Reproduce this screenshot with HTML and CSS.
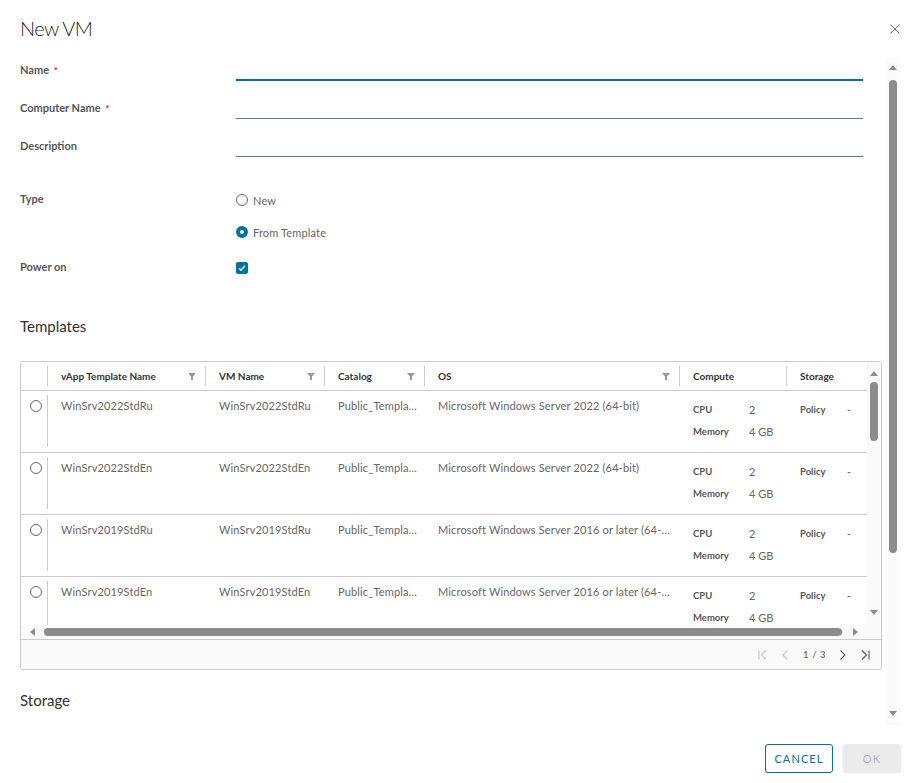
FILE: index.html
```html
<!DOCTYPE html>
<html lang="en">
<head>
<meta charset="utf-8">
<title>New VM</title>
<link rel="stylesheet" href="styles.css">
</head>
<body>
<div class="modal">
  <header class="modal-header">
    <h1 class="modal-title">New VM</h1>
    <button class="close" type="button" aria-label="Close">
      <svg width="10" height="10" viewBox="0 0 10 10"><path d="M0.5 0.5L9.5 9.5M9.5 0.5L0.5 9.5" stroke="#737373" stroke-width="1"/></svg>
    </button>
  </header>

  <div class="modal-body">
    <div class="body-content">
      <form class="form">
        <div class="field">
          <label class="label">Name <span class="req">*</span></label>
          <input class="input input-focus" type="text">
        </div>
        <div class="field">
          <label class="label">Computer Name <span class="req">*</span></label>
          <input class="input" type="text">
        </div>
        <div class="field">
          <label class="label">Description</label>
          <input class="input" type="text">
        </div>
        <div class="field field-type">
          <span class="label label-line">Type</span>
          <div class="radio-list">
            <label class="choice"><span class="radio"></span>New</label>
            <label class="choice"><span class="radio checked"></span>From Template</label>
          </div>
        </div>
        <div class="field field-power">
          <span class="label label-line">Power on</span>
          <label class="choice">
            <span class="checkbox"><svg width="12" height="12" viewBox="0 0 12 12"><path d="M3 6.2l2 2 4-4.4" fill="none" stroke="#fff" stroke-width="1.3"/></svg></span>
          </label>
        </div>
      </form>

      <h2 class="section-title">Templates</h2>

      <div class="datagrid">
        <div class="grid-main">
          <div class="grid-view">
            <div class="grid-head cols">
              <div class="hcell"><span class="hinner"></span></div>
              <div class="hcell"><span class="hinner">vApp Template Name<svg class="filter" width="8" height="7" viewBox="0 0 8 7"><path d="M0 0h8L5 3.4V7H3V3.4z"/></svg></span></div>
              <div class="hcell"><span class="hinner">VM Name<svg class="filter" width="8" height="7" viewBox="0 0 8 7"><path d="M0 0h8L5 3.4V7H3V3.4z"/></svg></span></div>
              <div class="hcell"><span class="hinner">Catalog<svg class="filter" width="8" height="7" viewBox="0 0 8 7"><path d="M0 0h8L5 3.4V7H3V3.4z"/></svg></span></div>
              <div class="hcell"><span class="hinner">OS<svg class="filter" width="8" height="7" viewBox="0 0 8 7"><path d="M0 0h8L5 3.4V7H3V3.4z"/></svg></span></div>
              <div class="hcell"><span class="hinner">Compute</span></div>
              <div class="hcell"><span class="hinner no-sep">Storage</span></div>
            </div>

            <div class="grid-body">
              <div class="grid-row cols">
                <div class="cell cell-select"><span class="radio"></span></div>
                <div class="cell">WinSrv2022StdRu</div>
                <div class="cell">WinSrv2022StdRu</div>
                <div class="cell">Public_Templates</div>
                <div class="cell">Microsoft Windows Server 2022 (64-bit)</div>
                <div class="cell cell-kv"><span class="k">CPU</span><span class="v">2</span><span class="k">Memory</span><span class="v">4 GB</span></div>
                <div class="cell cell-kv cell-storage"><span class="k">Policy</span><span class="v">-</span></div>
              </div>
              <div class="grid-row cols">
                <div class="cell cell-select"><span class="radio"></span></div>
                <div class="cell">WinSrv2022StdEn</div>
                <div class="cell">WinSrv2022StdEn</div>
                <div class="cell">Public_Templates</div>
                <div class="cell">Microsoft Windows Server 2022 (64-bit)</div>
                <div class="cell cell-kv"><span class="k">CPU</span><span class="v">2</span><span class="k">Memory</span><span class="v">4 GB</span></div>
                <div class="cell cell-kv cell-storage"><span class="k">Policy</span><span class="v">-</span></div>
              </div>
              <div class="grid-row cols">
                <div class="cell cell-select"><span class="radio"></span></div>
                <div class="cell">WinSrv2019StdRu</div>
                <div class="cell">WinSrv2019StdRu</div>
                <div class="cell">Public_Templates</div>
                <div class="cell">Microsoft Windows Server 2016 or later (64-bit)</div>
                <div class="cell cell-kv"><span class="k">CPU</span><span class="v">2</span><span class="k">Memory</span><span class="v">4 GB</span></div>
                <div class="cell cell-kv cell-storage"><span class="k">Policy</span><span class="v">-</span></div>
              </div>
              <div class="grid-row cols">
                <div class="cell cell-select"><span class="radio"></span></div>
                <div class="cell">WinSrv2019StdEn</div>
                <div class="cell">WinSrv2019StdEn</div>
                <div class="cell">Public_Templates</div>
                <div class="cell">Microsoft Windows Server 2016 or later (64-bit)</div>
                <div class="cell cell-kv"><span class="k">CPU</span><span class="v">2</span><span class="k">Memory</span><span class="v">4 GB</span></div>
                <div class="cell cell-kv cell-storage"><span class="k">Policy</span><span class="v">-</span></div>
              </div>
            </div>
          </div>

          <div class="scroll-y scroll-y-grid">
            <span class="arrow arrow-up"></span>
            <span class="thumb thumb-grid"></span>
            <span class="spacer"></span>
            <span class="arrow arrow-down"></span>
          </div>

          <div class="scroll-x">
            <span class="arrow arrow-left"></span>
            <span class="thumb-x"></span>
            <span class="arrow arrow-right"></span>
          </div>
          <div class="scroll-corner"></div>
        </div>

        <div class="grid-foot">
          <svg class="pg pg-off" width="12" height="12" viewBox="0 0 12 12"><path d="M2 1.5v9M9 1.5L4.5 6 9 10.5" fill="none" stroke="currentColor" stroke-width="1.1"/></svg>
          <svg class="pg pg-off" width="12" height="12" viewBox="0 0 12 12"><path d="M7.5 1.5L3 6l4.5 4.5" fill="none" stroke="currentColor" stroke-width="1.1"/></svg>
          <span class="pg-text">1 / 3</span>
          <svg class="pg" width="12" height="12" viewBox="0 0 12 12"><path d="M4.5 1.5L9 6l-4.5 4.5" fill="none" stroke="currentColor" stroke-width="1.1"/></svg>
          <svg class="pg" width="12" height="12" viewBox="0 0 12 12"><path d="M10 1.5v9M3 1.5L7.5 6 3 10.5" fill="none" stroke="currentColor" stroke-width="1.1"/></svg>
        </div>
      </div>

      <h2 class="section-title section-storage">Storage</h2>
    </div>

    <div class="scroll-y scroll-y-page">
      <span class="arrow arrow-up"></span>
      <span class="thumb thumb-page"></span>
      <span class="spacer"></span>
      <span class="arrow arrow-down"></span>
    </div>
  </div>

  <footer class="modal-footer">
    <button class="btn btn-outline" type="button">CANCEL</button>
    <button class="btn btn-disabled" type="button" disabled>OK</button>
  </footer>
</div>
</body>
</html>
```

FILE: styles.css
```css
* { box-sizing: border-box; }

body {
  margin: 0;
  background: #fff;
  font-family: Lato, "Noto Sans", sans-serif;
  color: #565656;
}

.modal {
  width: 916px;
  height: 783px;
  display: flex;
  flex-direction: column;
  overflow: hidden;
}

/* header */
.modal-header {
  height: 58px;
  flex: none;
  display: flex;
  justify-content: space-between;
  align-items: flex-start;
  padding: 16px 16px 0 20px;
}
.modal-title {
  margin: 0;
  font-size: 20px;
  font-weight: 300;
  line-height: 24px;
  letter-spacing: -0.6px;
  color: #1b1b1b;
}
.close {
  margin-top: 8px;
  padding: 0;
  border: 0;
  background: none;
  width: 10px;
  height: 10px;
  display: flex;
}

/* body */
.modal-body {
  flex: 1;
  min-height: 0;
  display: flex;
}
.body-content {
  flex: 1;
  min-width: 0;
  padding: 1px 4px 0 20px;
  overflow: hidden;
}

/* form */
.form {
  display: flex;
  flex-direction: column;
  margin: 0;
}
.field {
  display: grid;
  grid-template-columns: 216px 627px;
  margin-bottom: 16px;
}
.label {
  font-size: 11px;
  font-weight: 700;
  line-height: 13px;
  padding-top: 4px;
  color: #565656;
}
.label-line {
  padding-top: 2px;
}
.req {
  color: #e12200;
  font-size: 10px;
  margin-left: 2px;
}
.input {
  height: 22px;
  border: 0;
  border-bottom: 1px solid #6a7a81;
  background: transparent;
  outline: none;
  font: inherit;
  padding: 0;
}
.input-focus {
  border-bottom: 2px solid #0072a3;
}
.field-type {
  margin-top: 17px;
}
.radio-list {
  display: flex;
  flex-direction: column;
  gap: 12px;
}
.choice {
  display: flex;
  align-items: center;
  gap: 5px;
  height: 20px;
  font-size: 11px;
  letter-spacing: 0.15px;
  color: #666;
}
.radio {
  width: 12px;
  height: 12px;
  flex: none;
  border: 1px solid #666;
  border-radius: 50%;
  background: #fff;
}
.radio.checked {
  border: 4.5px solid #0072a3;
}
.checkbox {
  width: 12px;
  height: 12px;
  border-radius: 2px;
  background: #0072a3;
  display: flex;
}

.section-title {
  margin: 22px 0 25px;
  font-size: 15px;
  font-weight: 400;
  line-height: 20px;
  color: #313131;
}
.section-storage {
  margin: 20px 0 0;
}

/* datagrid */
.datagrid {
  width: 862px;
  border: 1px solid #ccc;
  border-radius: 3px;
  overflow: hidden;
}
.grid-main {
  display: grid;
  grid-template-columns: 1fr 14px;
  grid-template-rows: 263px 14px;
}
.grid-view {
  overflow: hidden;
  min-width: 0;
}
.cols {
  display: grid;
  grid-template-columns: 27px 158px 119px 100px 255px 107px 140px;
  width: max-content;
  min-width: 100%;
}
.grid-head {
  height: 29px;
  border-bottom: 1px solid #ccc;
  align-items: center;
}
.hcell {
  display: flex;
  align-items: center;
  height: 28px;
}
.hinner {
  flex: 1;
  height: 20px;
  display: flex;
  align-items: center;
  justify-content: space-between;
  padding: 0 9px 1px 13px;
  border-right: 1px solid #ccc;
  font-size: 10px;
  font-weight: 700;
  color: #333;
  white-space: nowrap;
}
.hinner.no-sep { border-right: 0; }
.filter { fill: #999; flex: none; margin-top: 1px; }

.grid-row {
  height: 62px;
  border-bottom: 1px solid #ccc;
}
.cell {
  padding: 8px 8px 0 13px;
  font-size: 11px;
  line-height: 13px;
  letter-spacing: 0.15px;
  color: #666;
  white-space: nowrap;
  overflow: hidden;
  text-overflow: ellipsis;
}
.cell-select {
  padding: 0;
  margin: 4px 0 5px;
  border-right: 1px solid #ccc;
  display: flex;
  justify-content: center;
  align-items: flex-start;
  padding-top: 5px;
  padding-left: 3px;
}
.cell-kv {
  display: grid;
  grid-template-columns: 56px auto;
  align-content: start;
  padding-top: 8px;
  line-height: 22px;
  letter-spacing: 0;
}
.cell-storage {
  grid-template-columns: 47px auto;
}
.k {
  font-size: 9.5px;
  font-weight: 700;
  color: #565656;
}
.v {
  font-size: 11px;
  color: #666;
}

/* scrollbars */
.scroll-y {
  display: flex;
  flex-direction: column;
  align-items: center;
  background: #fafafa;
}
.scroll-y-grid {
  grid-row: 1;
  grid-column: 2;
}
.scroll-y-page {
  width: 14px;
  margin: 0 16px 7px 0;
}
.arrow {
  width: 0;
  height: 0;
  flex: none;
}
.arrow-up {
  border-left: 4px solid transparent;
  border-right: 4px solid transparent;
  border-bottom: 5px solid #8c8c8c;
}
.arrow-down {
  border-left: 4px solid transparent;
  border-right: 4px solid transparent;
  border-top: 5px solid #8c8c8c;
}
.scroll-y-grid .arrow-up { margin-top: 9px; }
.scroll-y-grid .arrow-down { margin-bottom: 10px; }
.scroll-y-page .arrow-up { margin-top: 7px; }
.scroll-y-page .arrow-down { margin-bottom: 9px; }
.thumb {
  width: 8px;
  border-radius: 4px;
  background: #8c8c8c;
  flex: none;
}
.thumb-grid { margin-top: 6px; height: 59px; }
.thumb-page { margin-top: 10px; height: 473px; }
.spacer { flex: 1; }

.scroll-x {
  grid-row: 2;
  grid-column: 1;
  display: flex;
  align-items: center;
  padding: 0 7px 0 9px;
  background: #fafafa;
}
.arrow-left {
  border-top: 4px solid transparent;
  border-bottom: 4px solid transparent;
  border-right: 5px solid #8c8c8c;
}
.arrow-right {
  border-top: 4px solid transparent;
  border-bottom: 4px solid transparent;
  border-left: 5px solid #8c8c8c;
}
.thumb-x {
  height: 8px;
  width: 798px;
  margin: 0 11px 0 9px;
  border-radius: 4px;
  background: #8c8c8c;
}
.scroll-corner {
  grid-row: 2;
  grid-column: 2;
  background: #fafafa;
}

.grid-foot {
  height: 30px;
  border-top: 1px solid #ccc;
  background: #fafafa;
  display: flex;
  justify-content: flex-end;
  align-items: center;
  padding-right: 10px;
  gap: 11px;
}
.pg { color: #565656; flex: none; }
.pg-off { color: #c5c5c5; }
.pg-text {
  width: 22px;
  font-size: 9.5px;
  color: #565656;
  letter-spacing: 0.6px;
  white-space: nowrap;
}

/* footer */
.modal-footer {
  height: 51px;
  flex: none;
  display: flex;
  justify-content: flex-end;
  gap: 10px;
  padding: 12px 15px 0 0;
}
.btn {
  height: 29px;
  padding: 0;
  border-radius: 3px;
  font-family: inherit;
  font-size: 11px;
  font-weight: 400;
  letter-spacing: 1.1px;
}
.btn-outline {
  width: 68px;
  border: 1px solid #0072a3;
  background: #fff;
  color: #0072a3;
}
.btn-disabled {
  width: 58px;
  border: 0;
  background: #ebebeb;
  color: #b8b8b8;
}
```
